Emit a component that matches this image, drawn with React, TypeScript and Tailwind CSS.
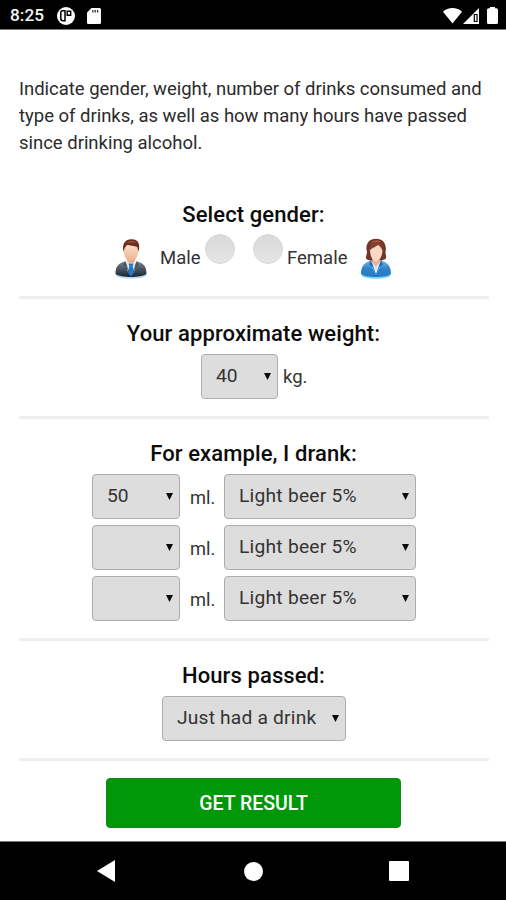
import React from "react";

function Select({ value, className }: { value: string; className: string }) {
  return (
    <button
      type="button"
      className={`flex h-[45px] items-center justify-between rounded-[4px] border border-[#adadad] bg-[#dddddd] pr-[6px] pl-[14px] text-[19.2px] leading-none text-[#333] ${className}`}
    >
      <span className="pb-[2px] whitespace-nowrap">{value}</span>
      <svg className="h-[7px] w-[7px] shrink-0" viewBox="0 0 7 7">
        <path d="M0 0H7L3.5 7Z" fill="#0a0a0a" />
      </svg>
    </button>
  );
}

function Heading({ children }: { children: React.ReactNode }) {
  return (
    <h2 className="pr-px text-center text-[22px] leading-[26px] font-medium tracking-[0.1px] whitespace-nowrap text-[#0c0c0c]">
      {children}
    </h2>
  );
}

function Radio() {
  return (
    <span className="block h-[30px] w-[30px] shrink-0 rounded-full border border-[#d6d6d6] bg-linear-to-b from-[#d9d9d9] via-[#dfdfdf] to-[#e6e6e6]" />
  );
}

function ManIcon() {
  return (
    <svg className="h-[42px] w-[34px] shrink-0" viewBox="0 0 34 42">
      <defs>
        <linearGradient id="suit" x1="0" y1="0" x2="0" y2="1">
          <stop offset="0" stopColor="#7b8792" />
          <stop offset=".5" stopColor="#46525f" />
          <stop offset="1" stopColor="#172536" />
        </linearGradient>
        <linearGradient id="face" x1="0" y1="0" x2="0" y2="1">
          <stop offset="0" stopColor="#fbe3cf" />
          <stop offset="1" stopColor="#eeb08c" />
        </linearGradient>
      </defs>
      <ellipse cx="17" cy="37.5" rx="15" ry="3.2" fill="#bddcf2" />
      <path d="M1.5 36C1.5 29 3.500 25.500 11 23.500L17 26L23 23.500C30.500 25.500 32.500 29 32.500 36C28 40 6 40 1.500 36Z" fill="url(#suit)" />
      <path d="M11.500 22.500L17 26L22.500 22.500L20.500 33L17 36L13.500 33Z" fill="#dfeaf3" />
      <path d="M14.500 25.500H19.500L18.600 28.500L20.500 34L17 38.500L13.500 34L15.400 28.500Z" fill="#2678c8" />
      <path d="M11 23L9 27L12.500 29.500L16 38L12.500 26ZM23 23L25 27L21.500 29.500L18 38L21.500 26Z" fill="#4b5866" />
      <path d="M13 18H21V23L17 26L13 23Z" fill="#e5a580" />
      <path d="M10 9C10 3.500 24 3.500 24 9V14C24 19.500 20.500 23.500 17 23.500C13.500 23.500 10 19.500 10 14Z" fill="url(#face)" />
      <path d="M9.500 14C7.500 5 12 0.800 18 1.200C24.500 1.200 26.500 6 24.500 14L23.300 9C20 7.500 16 7.500 13 7L10.600 10Z" fill="#6b2c1c" />
      <path d="M12 5.500C14 2.500 20 2.200 23 5C20 4.500 15 4 12 5.500Z" fill="#9b5138" />
    </svg>
  );
}

function WomanIcon() {
  return (
    <svg className="h-[42px] w-[32px] shrink-0" viewBox="0 0 32 42">
      <defs>
        <linearGradient id="jacket" x1="0" y1="0" x2="0" y2="1">
          <stop offset="0" stopColor="#75b8e8" />
          <stop offset=".5" stopColor="#2f82ca" />
          <stop offset="1" stopColor="#2478c6" />
        </linearGradient>
      </defs>
      <ellipse cx="16" cy="37.500" rx="14" ry="3.200" fill="#6fd3f5" />
      <path d="M7 14C5 6.500 8.500 0.800 16 0.800C23.500 0.800 27 6.500 25.500 14C25.500 17 27 18.500 25.500 21C22 23.500 10 24 6.500 21C5 19 7 17 7 14Z" fill="#713426" />
      <path d="M1 36C1 29 3.500 25 10.500 22.500L16 26L21.500 22.500C28.500 25 31 29 31 36C27 40 5 40 1 36Z" fill="url(#jacket)" />
      <path d="M12.500 20H19.500L20 25L16 31L12 25Z" fill="#ecb38f" />
      <path d="M11.500 24L15.800 28.500L20.500 24L19.500 30L16 36L12.500 30Z" fill="#d5eaf8" />
      <path d="M10.500 22.500L9 26.500L12.500 29L16 37L12.500 26ZM21.500 22.500L23 26.500L19.500 29L16 37L19.500 26Z" fill="#2870b4" />
      <path d="M10 9C12 5 20 4 22.500 10C23 17 20 23 16 23C12 23 9.500 17 10 9Z" fill="#f8d8c2" />
      <path d="M9 14C8 7 12 3.500 16 3.500C21 3.500 24.500 8 23 14C22 11 20.500 8.500 18 7C15 9.500 11.500 9.500 9 14Z" fill="#843f2d" />
      <path d="M10.500 5C13 2 18 1.700 21 4C17 3.500 13.500 3.500 10.500 5Z" fill="#b4694c" />
    </svg>
  );
}

function StatusBar() {
  return (
    <header className="flex h-[30px] items-center border-b border-[#777] bg-black pt-[2px] pr-[8px] pl-[10px] text-[#f5f5f5]">
      <span className="w-[47px] text-[17.2px] leading-none font-medium tracking-[0.1px]">8:25</span>
      <svg className="h-[18px] w-[18px]" viewBox="0 0 18 18">
        <circle cx="9" cy="9" r="9" fill="#fff" />
        <path d="M8 3.800H5.300Q3.800 3.800 3.800 5.300V11.500Q3.800 13.700 6 13.700H8Z" fill="#fff" stroke="#000" strokeWidth="1.500" />
        <path d="M10.200 4.200H13.700V8.200H10.200Z" fill="#fff" stroke="#000" strokeWidth="1.400" />
      </svg>
      <svg className="ml-[12px] h-[16px] w-[14px]" viewBox="0 0 14 16">
        <path d="M4.500 0H12.500Q14 0 14 1.500V14.500Q14 16 12.500 16H1.500Q0 16 0 14.500V4.500Z" fill="#fff" />
        <path d="M5.800 2V4.500M8.200 2V4.500M10.600 2V4.500" stroke="#333" strokeWidth="1.300" />
      </svg>
      <svg className="ml-auto h-[17px] w-[19px]" viewBox="0 0 20 17">
        <path d="M0 4.500C5 -.7 15 -.7 20 4.500L10 17Z" fill="#fff" />
      </svg>
      <svg className="ml-[1px] h-[16px] w-[16px]" viewBox="0 0 16 16">
        <path d="M16 0V16H0Z" fill="#fff" />
        <path d="M11.300 6.500H14V13.500H11.300Z" fill="#fff" stroke="#000" strokeWidth="1.200" />
      </svg>
      <svg className="ml-[8px] h-[17px] w-[11px]" viewBox="0 0 11 17">
        <path d="M3 0H8V1.300H9.500Q11 1.300 11 2.800V15.500Q11 17 9.500 17H1.500Q0 17 0 15.500V2.800Q0 1.300 1.500 1.300H3Z" fill="#fff" />
      </svg>
    </header>
  );
}

const drinks = ["50", "", ""];

export default function App() {
  return (
    <div className="flex h-[900px] w-[506px] flex-col overflow-hidden bg-white font-[Roboto,sans-serif] text-[#333]">
      <StatusBar />
      <main className="h-[811px] pr-[17px] pl-[19px]">
        <p className="h-[126px] pt-[46px] text-[18.5px] leading-[26.900px] tracking-[-0.020px] whitespace-nowrap text-[#2b2b2b]">
          Indicate gender, weight, number of drinks consumed and
          <br />
          type of drinks, as well as how many hours have passed
          <br />
          since drinking alcohol.
        </p>

        <section className="h-[143px] border-b-[3px] border-[#eeeeee] pt-[46px]">
          <Heading>Select gender:</Heading>
          <div className="mt-[4px] flex h-[48px] items-start pl-[95px] text-[18.500px] leading-[22px]">
            <div className="pt-[6px]"><ManIcon /></div>
            <span className="mt-[15px] ml-[12px] w-[45px]">Male</span>
            <div className="pt-[2px]"><Radio /></div>
            <div className="ml-[18px] pt-[2px]"><Radio /></div>
            <span className="mt-[15px] ml-[4px] w-[73px]">Female</span>
            <div className="pt-[6px]"><WomanIcon /></div>
          </div>
        </section>

        <section className="h-[120px] border-b-[3px] border-[#eeeeee] pt-[22px]">
          <Heading>Your approximate weight:</Heading>
          <div className="mt-[7px] flex items-center pl-[182px]">
            <Select value="40" className="w-[77px]" />
            <span className="ml-[5px] pt-[2px] text-[18.500px]">kg.</span>
          </div>
        </section>

        <section className="h-[222px] border-b-[3px] border-[#eeeeee] pt-[22px]">
          <Heading>For example, I drank:</Heading>
          <div className="mt-[7px] flex flex-col gap-[6px] pl-[73px]">
            {drinks.map((amount, i) => (
              <div key={i} className="flex items-center">
                <Select value={amount} className="w-[88px]" />
                <span className="w-[44px] pt-[2px] pl-[10px] text-[18.300px]">ml.</span>
                <Select value="Light beer 5%" className="w-[192px] tracking-[0.250px]" />
              </div>
            ))}
          </div>
        </section>

        <section className="h-[120px] border-b-[3px] border-[#eeeeee] pt-[22px]">
          <Heading>Hours passed:</Heading>
          <div className="mt-[7px] flex pl-[143px]">
            <Select value="Just had a drink" className="w-[184px] tracking-[0.200px]" />
          </div>
        </section>

        <button type="button" className="mt-[17px] ml-[87px] flex h-[50px] w-[295px] items-center justify-center rounded-[4px] border border-[#16851a] bg-[#009808] pt-[2px] text-[19.500px] font-medium text-white">
          GET RESULT
        </button>
      </main>
      <nav className="flex h-[59px] items-center border-t border-[#777] bg-black pl-[97px]">
        <svg className="h-[22px] w-[18px]" viewBox="0 0 18 22">
          <path d="M18 0V22L0 11Z" fill="#fff" />
        </svg>
        <span className="ml-[129px] h-[19px] w-[19px] rounded-full bg-white" />
        <span className="ml-[126px] h-[20px] w-[20px] rounded-[1px] bg-white" />
      </nav>
    </div>
  );
}
